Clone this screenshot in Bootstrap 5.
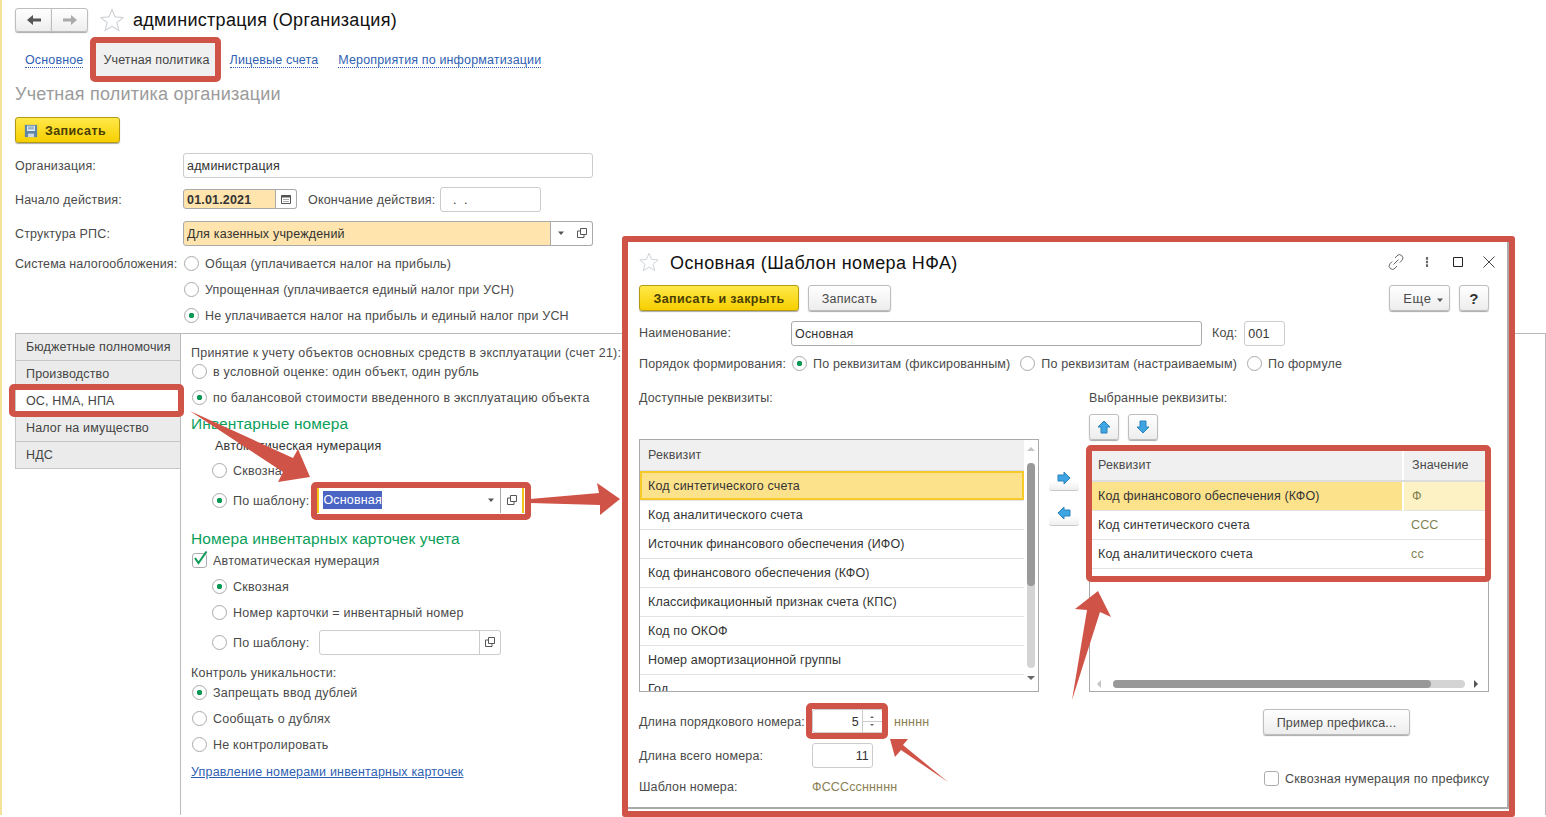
<!DOCTYPE html>
<html lang="ru">
<head>
  <meta charset="UTF-8">
  <title>Учетная политика организации</title>
  <link href="https://cdn.jsdelivr.net/npm/bootstrap@5.3.0/dist/css/bootstrap.min.css" rel="stylesheet">
  <style>
    html, body { height: 817px; overflow: hidden; }
    body { font-family: "Liberation Sans", Arial, sans-serif; font-size: 12.5px; letter-spacing: .18px; color: #4a4a4a; background: #fff; position: relative; }
    .page { height: 815px; border-left: 2px solid #f3e39a; padding-left: 13px; }

    /* header */
    .top-row { padding-top: 8px; height: 32px; }
    .title-big { font-size: 18px; color: #111; line-height: 24px; margin-left: 9px; letter-spacing: .3px; }
    .star-ico { width: 24px; height: 24px; margin-left: 12px; }
    .nav-pair .btn { width: 37px; height: 24px; padding: 0; line-height: 1; }
    .page-links { margin: 11px 0 0 0; height: 33px; padding-left: 0; }
    .page-links .nav-link { padding: 0 10px; height: 33px; line-height: 35px; font-size: 12.5px; letter-spacing: .14px; color: #2f5fb3; }
    .page-links .nav-link span { border-bottom: 1px dotted #2f5fb3; }
    .page-links .nav-link.active { background: #f0f0f0; color: #444; }
    .page-links .nav-link.active span { border: 0; }
    .page-head { font-size: 18px; color: #9b9b9b; height: 22px; line-height: 22px; margin: 7px 0 12px; font-weight: 400; letter-spacing: .22px; }

    /* 1C style buttons */
    .btn-grey, .btn-gold { font-size: 12.5px; padding: 2px 0 0; height: 26px; border-radius: 3px; box-shadow: 0 1px 1px #aaa; }
    .btn-grey { background: linear-gradient(#fff, #ededed); border: 1px solid #bdbdbd; color: #4a4a4a; }
    .btn-gold { background: linear-gradient(#ffe84a, #f7cf00); border: 1px solid #b39a12; color: #4a3e00; font-weight: 700; letter-spacing: .4px; }
    .btn-save { width: 105px; text-align: left; padding-left: 8px; }
    .btn-save svg { margin-right: 7px; vertical-align: -3px; }

    /* rows: every cell is a 20px line centred on the row's text */
    .line { display: flex; align-items: center; height: 20px; white-space: nowrap; }
    .org-form { display: grid; grid-template-columns: 168px 410px; grid-template-rows: 34px 34px 30px 26px 26px 20px; margin-top: 13px; }
    .org-form .wide { grid-column: 2; }
    .org-form .tight { letter-spacing: .07px; }

    .fld { flex-wrap: nowrap; height: 25px; margin-top: -2px; }
    .fld .form-control { height: 25px; min-height: 0; padding: 2px 3px 0; font-size: 12.5px; letter-spacing: .18px; color: #333; border: 1px solid #ccc; border-radius: 3px; box-shadow: none; }
    .fld .fld-btn { width: 22px; height: 25px; padding: 0; border: 1px solid #ccc; border-left: 0; background: #fff; border-radius: 0; display: flex; align-items: center; justify-content: center; }
    .fld .fld-btn:last-child { border-radius: 0 3px 3px 0; }
    .fld.has-btn .form-control { border-radius: 3px 0 0 3px; }
    .fld .form-control.hl { background: #ffe4ad; border-color: #aaa; color: #333; }
    .fld .hl ~ .fld-btn { border-color: #aaa; }
    .date-fld { width: 114px; height: 20px; }
    .date-fld .form-control, .date-fld .fld-btn { height: 20px; }
    .date-fld .form-control { font-weight: 700; }
    .date-end { width: 101px; margin-left: 5px; }
    .end-label { margin-left: 11px; }

    .form-check-input { width: 15px; height: 15px; margin: -2px 6px 0 0; flex: none; background-color: #fff; border: 1px solid #aaa; box-shadow: none; }
    .form-check-input:checked[type=radio] { background-color: #fff; border-color: #aaa; background-image: radial-gradient(circle, #0b9a55 0 2.5px, transparent 3px); }
    .form-check-input:checked[type=checkbox] { background-color: #fff; border-color: #aaa; background-image: none; }
    .radio-first { margin-left: 1px; }
    .check-wrap { position: relative; display: flex; }
    .check-wrap svg { position: absolute; left: 2px; top: -5px; }

    /* lower section */
    .lower { display: flex; height: 482px; margin-top: 7px; border-top: 1px solid #bbb; border-right: 1px solid #bbb; }
    .side-tabs { width: 165px; flex: none; }
    .side-tabs .nav-link { height: 27px; line-height: 27px; padding: 0 0 0 10px; white-space: nowrap; background: #ebebeb; border: 1px solid #c6c6c6; border-top: 0; border-right: 0; color: #444; font-size: 12.5px; letter-spacing: .15px; }
    .side-tabs .nav-link.active { background: #fff; }
    .panel-body { flex: 1; border-left: 1px solid #bbb; padding: 9px 0 0 10px; letter-spacing: .22px; display: grid; grid-template-rows: 19px 26px 27px 21px 25px 30px 39px 21px 26px 26px 30px 30px 20px 26px 26px 27px 20px; }
    .panel-body > .line:not(.step1) .form-check-input { margin-left: 1px; }
    .panel-body > .line .check-wrap .form-check-input { margin-right: 6px; }
    .panel-body > .green-head { font-size: 15.5px; letter-spacing: .1px; color: #0aa05a; margin-top: -1px; }
    .step1 { padding-left: 21px; }
    .dark-text { color: #333; margin-left: 24px; }
    .tpl-fld { width: 207px; margin-left: 8px; border-left: 2px solid #f5c518; border-right: 2px solid #f5c518; }
    .tpl-fld .form-control { border: 0; padding: 0 4px; }
    .fld.tpl-fld .fld-btn { border: 0; border-left: 1px solid #aaa; border-radius: 0; }
    .tpl-fld mark { background: #4a64c4; color: #fff; padding: 0; }
    .tpl-empty { width: 182px; margin-left: 10px; }
    .link-under { color: #2f5fb3; text-decoration: underline; letter-spacing: .18px; }

    /* dialog */
    .dlg { position: absolute; left: 622px; top: 236px; width: 893px; height: 581px; background: #fff; border: 6px solid #d05347; border-radius: 3px; z-index: 2; }
    .dlg-inner { height: 567px; border-right: 2px solid #aaa; border-bottom: 2px solid #aaa; padding: 0 18px 0 11px; font-size: 12.5px; letter-spacing: .15px; }
    .dlg-head { height: 40px; display: flex; align-items: center; }
    .dlg-title { font-size: 18px; color: #111; margin: 2px 0 0 11px; letter-spacing: .4px; }
    .dlg-tools { margin-left: auto; display: flex; align-items: center; gap: 15px; margin-right: -8px; }
    .dlg-buttons { display: flex; gap: 9px; margin-top: 3px; }
    .dlg-buttons .btn-grey { letter-spacing: .25px; }
    .b-close { width: 160px; }
    .b-write { width: 83px; }
    .dlg-buttons .b-more { width: 61px; margin-left: auto; padding-left: 8px; letter-spacing: .6px; font-size: 13px; }
    .dlg-buttons .b-help { width: 30px; font-weight: 700; font-size: 15px; color: #333; }
    .name-row { display: flex; align-items: center; height: 25px; margin-top: 10px; }
    .name-row .lbl { width: 152px; }
    .name-row .fld { margin-top: 0; }
    .name-row .fld .form-control { padding-top: 0; }
    .name-row .fld-name { width: 411px; }
    .name-row .fld-name .form-control { border-color: #aaa; }
    .code-lbl { margin: 0 7px 0 10px; }
    .fld-code { width: 41px; }
    .order-row { margin-top: 8px; }
    .order-row .lbl-order { margin-right: 6px; }
    .order-row .opt { margin-right: 10px; }
    .lists { display: grid; grid-template-columns: 400px 50px 400px; height: 305px; margin-top: 14px; }
    .grid-box { position: relative; border: 1px solid #aaa; overflow: hidden; }
    .grid-left { height: 253px; margin-top: 31px; }
    .grid-right { height: 243px; margin-top: 9px; }
    .move-btns { display: flex; gap: 9px; margin-top: 6px; }
    .move-btns .btn { width: 30px; padding: 0; }
    .mid-btns { padding: 77px 0 0 10px; display: flex; flex-direction: column; gap: 9px; }
    .mid-btns .btn { width: 30px; height: 26px; padding: 0 0 3px; border: 0; border-bottom: 1px solid #c8c8c8; border-radius: 3px; background: linear-gradient(#fff 65%, #eee); }
    .req-table { table-layout: fixed; margin: 0; width: 384px; --bs-table-bg: transparent; }
    .req-table th, .req-table td { font-weight: 400; font-size: 12.5px; color: #4a4a4a; padding: 1px 8px 0; height: 29px; vertical-align: middle; border-bottom: 1px solid #e3e3e3; white-space: nowrap; }
    .req-table td { color: #333; }
    .req-table th { background: #f0f0f0; height: 31px; border-bottom: 2px solid #ddd; }
    .req-table td.val { color: #7f7f50; }
    .grid-left .req-table tr.cur td { background: #fde28c; outline: 2px solid #f8c92a; outline-offset: -2px; }
    .grid-right .req-table { width: 396px; margin-left: 2px; }
    .grid-right .req-table th:first-child, .grid-right .req-table td:first-child { padding-left: 6px; }
    .grid-right .req-table th:first-child, .grid-right .req-table tr.cur td:first-child { border-right: 2px solid #fff; }
    .grid-right .req-table tr.cur td { background: #fde28c; }
    .grid-right .req-table tr.cur td.val { background: #fdf2c4; }
    .val-col { width: 85px; }
    .vbar, .hbar { position: absolute; background: #d4d4d4; border-radius: 4px; }
    .vbar { right: 3px; top: 23px; width: 8px; height: 205px; }
    .vbar i { display: block; width: 8px; height: 123px; background: #999; border-radius: 4px; }
    .hbar { left: 23px; bottom: 3px; height: 8px; width: 352px; }
    .hbar i { display: block; height: 8px; width: 318px; background: #999; border-radius: 4px; }
    .sarrow { position: absolute; width: 0; height: 0; border: 4px solid transparent; }
    .sa-up { right: 3px; top: 7px; border-bottom-color: #c4c4c4; border-top: 0; }
    .sa-down { right: 3px; top: 236px; border-top-color: #666; border-bottom: 0; }
    .sa-left { left: 7px; bottom: 3px; border-right-color: #c4c4c4; border-left: 0; }
    .sa-right { left: 384px; bottom: 3px; border-left-color: #555; border-right: 0; }
    .bottom-form { display: grid; grid-template-columns: 173px 451px 226px; grid-template-rows: 34px 31px 20px; margin-top: 19px; }
    .spin-fld { width: 71px; height: 24px; }
    .spin-fld .form-control { height: 24px; text-align: right; padding-right: 3px; }
    .fld.spin-fld .fld-btn { width: 21px; height: 24px; flex-direction: column; gap: 6px; background: linear-gradient(#ccc, #ccc) center / 100% 1px no-repeat #fff; }
    .tiny-up, .tiny-down { width: 0; height: 0; border: 2px solid transparent; display: block; }
    .tiny-up { border-bottom-color: #666; border-top: 0; }
    .tiny-down { border-top-color: #666; border-bottom: 0; }
    .total-fld { width: 61px; }
    .total-fld .form-control { text-align: right; padding-right: 3px; }
    .olive { color: #8a8054; }
    .olive-gap { margin-left: 11px; }
    .dlg-inner .b-sample { width: 147px; letter-spacing: .2px; }
    .check-last { margin: -8px 0 0 1px; letter-spacing: .22px; }

    .marks { position: absolute; left: 0; top: 0; z-index: 3; pointer-events: none; }
  </style>
</head>
<body>
  <svg width="0" height="0" class="d-block">
    <symbol id="ic-open" viewBox="0 0 12 12"><path d="M4.500 1.500h6v6h-6z M4.500 4H1.500v6.500h6.500V7.500" fill="none" stroke="#555" stroke-width="1"/></symbol>
    <symbol id="ic-caret" viewBox="0 0 8 8"><path d="M1 2.500h6L4 6z" fill="#555"/></symbol>
    <symbol id="ic-star" viewBox="0 0 24 24"><path d="M12 1.500l3 7.400 8 .6-6.100 5.100 1.900 7.800L12 18.200 5.200 22.400l1.900-7.800L1 9.500l8-.6z" fill="#fff" stroke="#cfd4d8" stroke-width="1.200"/></symbol>
  </svg>

  <div class="page">
    <div class="top-row d-flex align-items-start">
      <div class="btn-group nav-pair">
        <button class="btn btn-grey" type="button"><svg width="16" height="12" viewBox="0 0 16 12"><path d="M1 6l6-5v3.500h8v3H7V11z" fill="#555"/></svg></button>
        <button class="btn btn-grey" type="button"><svg width="16" height="12" viewBox="0 0 16 12"><path d="M15 6L9 1v3.500H1v3h8V11z" fill="#aaa"/></svg></button>
      </div>
      <svg class="star-ico"><use href="#ic-star"/></svg>
      <div class="title-big">администрация (Организация)</div>
    </div>

    <ul class="nav page-links">
      <li class="nav-item"><a class="nav-link" href="#"><span>Основное</span></a></li>
      <li class="nav-item"><a class="nav-link active" href="#"><span>Учетная политика</span></a></li>
      <li class="nav-item"><a class="nav-link" href="#"><span>Лицевые счета</span></a></li>
      <li class="nav-item"><a class="nav-link" href="#"><span>Мероприятия по информатизации</span></a></li>
    </ul>
    <h1 class="page-head">Учетная политика организации</h1>

    <button class="btn btn-gold btn-save d-block" type="button">
      <svg width="14" height="14" viewBox="0 0 16 16"><path d="M1 1h14v14H1z" fill="#5d86a8"/><path d="M3.500 2h9v6h-9z" fill="#e8eef3"/><path d="M4.500 11h7v4h-7z" fill="#cfd8df"/><path d="M4.500 3.500h7M4.500 5.500h7" stroke="#5d86a8"/></svg>Записать
    </button>

    <div class="org-form">
      <div class="line">Организация:</div>
      <div class="line"><div class="input-group fld"><input class="form-control" value="администрация"></div></div>

      <div class="line">Начало действия:</div>
      <div class="line">
        <div class="input-group fld has-btn date-fld">
          <input class="form-control hl" value="01.01.2021">
          <button class="fld-btn" type="button"><svg width="12" height="12" viewBox="0 0 12 12"><path d="M1.500 2.500h9v8h-9z" fill="none" stroke="#555"/><path d="M1.500 2h9v2.500h-9zM3.500 6h1v1h-1zM5.500 6h1v1h-1zM7.500 6h1v1h-1zM3.500 8h1v1h-1zM5.500 8h1v1h-1zM7.500 8h1v1h-1z" fill="#555"/></svg></button>
        </div>
        <span class="end-label">Окончание действия:</span>
        <div class="input-group fld date-end"><input class="form-control ps-2" value=" .  ."></div>
      </div>

      <div class="line">Структура РПС:</div>
      <div class="line">
        <div class="input-group fld has-btn">
          <input class="form-control hl" value="Для казенных учреждений">
          <button class="fld-btn" type="button"><svg width="8" height="8"><use href="#ic-caret"/></svg></button>
          <button class="fld-btn" type="button"><svg width="12" height="12"><use href="#ic-open"/></svg></button>
        </div>
      </div>

      <div class="line tight">Система налогообложения:</div>
      <label class="line"><input class="form-check-input radio-first" type="radio" name="tax">Общая (уплачивается налог на прибыль)</label>
      <label class="line wide"><input class="form-check-input radio-first" type="radio" name="tax">Упрощенная (уплачивается единый налог при УСН)</label>
      <label class="line wide"><input class="form-check-input radio-first" type="radio" name="tax" checked>Не уплачивается налог на прибыль и единый налог при УСН</label>
    </div>

    <div class="lower">
      <div class="side-tabs nav flex-column">
        <a class="nav-link" href="#">Бюджетные полномочия</a>
        <a class="nav-link" href="#">Производство</a>
        <a class="nav-link active" href="#">ОС, НМА, НПА</a>
        <a class="nav-link" href="#">Налог на имущество</a>
        <a class="nav-link" href="#">НДС</a>
      </div>
      <div class="panel-body">
        <div class="line">Принятие к учету объектов основных средств в эксплуатации (счет 21):</div>
        <label class="line"><input class="form-check-input" type="radio" name="os">в условной оценке: один объект, один рубль</label>
        <label class="line"><input class="form-check-input" type="radio" name="os" checked>по балансовой стоимости введенного в эксплуатацию объекта</label>
        <div class="line green-head">Инвентарные номера</div>
        <div class="line dark-text">Автоматическая нумерация</div>
        <label class="line step1"><input class="form-check-input" type="radio" name="inv">Сквозная</label>
        <div class="line step1">
          <input class="form-check-input" type="radio" name="inv" checked>По шаблону:
          <div class="input-group fld has-btn tpl-fld">
            <div class="form-control d-flex align-items-center"><mark>Основная</mark></div>
            <button class="fld-btn" type="button"><svg width="8" height="8"><use href="#ic-caret"/></svg></button>
            <button class="fld-btn" type="button"><svg width="12" height="12"><use href="#ic-open"/></svg></button>
          </div>
        </div>
        <div class="line green-head">Номера инвентарных карточек учета</div>
        <label class="line">
          <span class="check-wrap"><input class="form-check-input" type="checkbox" checked>
            <svg width="16" height="16" viewBox="0 0 16 16"><path d="M2 8l3.500 5L13.500 1.500" fill="none" stroke="#0b9a55" stroke-width="2"/></svg></span>Автоматическая нумерация
        </label>
        <label class="line step1"><input class="form-check-input" type="radio" name="card" checked>Сквозная</label>
        <label class="line step1"><input class="form-check-input" type="radio" name="card">Номер карточки = инвентарный номер</label>
        <div class="line step1">
          <input class="form-check-input" type="radio" name="card">По шаблону:
          <div class="input-group fld has-btn tpl-empty">
            <input class="form-control">
            <button class="fld-btn" type="button"><svg width="12" height="12"><use href="#ic-open"/></svg></button>
          </div>
        </div>
        <div class="line">Контроль уникальности:</div>
        <label class="line"><input class="form-check-input" type="radio" name="uniq" checked>Запрещать ввод дублей</label>
        <label class="line"><input class="form-check-input" type="radio" name="uniq">Сообщать о дублях</label>
        <label class="line"><input class="form-check-input" type="radio" name="uniq">Не контролировать</label>
        <div class="line"><a class="link-under" href="#">Управление номерами инвентарных карточек</a></div>
      </div>
    </div>
  </div>

  <!-- окно шаблона -->
  <div class="dlg">
    <div class="dlg-inner">
      <div class="dlg-head">
        <svg width="20" height="20"><use href="#ic-star"/></svg>
        <div class="dlg-title">Основная (Шаблон номера НФА)</div>
        <div class="dlg-tools">
          <svg width="16" height="16" viewBox="0 0 16 16"><path d="M5.500 10.500l5-5M7 4l2-2.200a3.200 3.200 0 0 1 5 4.400l-2.200 2.300M9 12l-2 2.200a3.200 3.200 0 0 1-5-4.400l2.200-2.300" fill="none" stroke="#666"/></svg>
          <svg width="16" height="16" viewBox="0 0 16 16"><path d="M6.500 2.500h3v3h-3zM6.500 6.500h3v3h-3zM6.500 10.500h3v3h-3z" fill="#666" transform="matrix(.7 0 0 .9 2.400 .8)"/></svg>
          <svg width="16" height="16" viewBox="0 0 16 16"><path d="M3.500 3.500h9v9h-9z" fill="none" stroke="#222"/></svg>
          <svg width="16" height="16" viewBox="0 0 16 16"><path d="M2.500 2.500l11 11M13.500 2.500l-11 11" stroke="#444"/></svg>
        </div>
      </div>

      <div class="dlg-buttons">
        <button class="btn btn-gold b-close" type="button">Записать и закрыть</button>
        <button class="btn btn-grey b-write" type="button">Записать</button>
        <button class="btn btn-grey b-more" type="button">Еще <svg width="8" height="8"><use href="#ic-caret"/></svg></button>
        <button class="btn btn-grey b-help" type="button">?</button>
      </div>

      <div class="name-row">
        <div class="lbl">Наименование:</div>
        <div class="input-group fld fld-name"><input class="form-control" value="Основная"></div>
        <div class="code-lbl">Код:</div>
        <div class="input-group fld fld-code"><input class="form-control" value="001"></div>
      </div>

      <div class="line order-row">
        <span class="lbl-order">Порядок формирования:</span>
        <label class="d-flex align-items-center opt"><input class="form-check-input" type="radio" name="ord" checked>По реквизитам (фиксированным)</label>
        <label class="d-flex align-items-center opt"><input class="form-check-input" type="radio" name="ord">По реквизитам (настраиваемым)</label>
        <label class="d-flex align-items-center opt"><input class="form-check-input" type="radio" name="ord">По формуле</label>
      </div>

      <div class="lists">
        <div>
          <div class="line">Доступные реквизиты:</div>
          <div class="grid-box grid-left">
            <table class="table req-table">
              <thead><tr><th>Реквизит</th></tr></thead>
              <tbody>
                <tr class="cur"><td>Код синтетического счета</td></tr>
                <tr><td>Код аналитического счета</td></tr>
                <tr><td>Источник финансового обеспечения (ИФО)</td></tr>
                <tr><td>Код финансового обеспечения (КФО)</td></tr>
                <tr><td>Классификационный признак счета (КПС)</td></tr>
                <tr><td>Код по ОКОФ</td></tr>
                <tr><td>Номер амортизационной группы</td></tr>
                <tr><td>Год</td></tr>
              </tbody>
            </table>
            <span class="sarrow sa-up"></span>
            <div class="vbar"><i></i></div>
            <span class="sarrow sa-down"></span>
          </div>
        </div>
        <div class="mid-btns">
          <button class="btn" type="button"><svg width="14" height="14" viewBox="0 0 14 14"><path d="M13 7L7 1v3H1v6h6v3z" fill="#3fa5e2" stroke="#2b83bd"/></svg></button>
          <button class="btn" type="button"><svg width="14" height="14" viewBox="0 0 14 14"><path d="M1 7l6-6v3h6v6H7v3z" fill="#3fa5e2" stroke="#2b83bd"/></svg></button>
        </div>
        <div>
          <div class="line">Выбранные реквизиты:</div>
          <div class="move-btns">
            <button class="btn btn-grey" type="button"><svg width="14" height="14" viewBox="0 0 14 14"><path d="M7 1l6 6h-3v6H4V7H1z" fill="#3fa5e2" stroke="#2b83bd"/></svg></button>
            <button class="btn btn-grey" type="button"><svg width="14" height="14" viewBox="0 0 14 14"><path d="M7 13l6-6h-3V1H4v6H1z" fill="#3fa5e2" stroke="#2b83bd"/></svg></button>
          </div>
          <div class="grid-box grid-right">
            <table class="table req-table">
              <colgroup><col><col class="val-col"></colgroup>
              <thead><tr><th>Реквизит</th><th>Значение</th></tr></thead>
              <tbody>
                <tr class="cur"><td>Код финансового обеспечения (КФО)</td><td class="val">Ф</td></tr>
                <tr><td>Код синтетического счета</td><td class="val">ССС</td></tr>
                <tr><td>Код аналитического счета</td><td class="val">сс</td></tr>
              </tbody>
            </table>
            <span class="sarrow sa-left"></span>
            <div class="hbar"><i></i></div>
            <span class="sarrow sa-right"></span>
          </div>
        </div>
      </div>

      <div class="bottom-form">
        <div class="line">Длина порядкового номера:</div>
        <div class="line">
          <div class="input-group fld has-btn spin-fld">
            <input class="form-control" value="5">
            <button class="fld-btn" type="button"><span class="tiny-up"></span><span class="tiny-down"></span></button>
          </div>
          <span class="olive olive-gap">ннннн</span>
        </div>
        <div class="line"><button class="btn btn-grey b-sample" type="button">Пример префикса...</button></div>

        <div class="line">Длина всего номера:</div>
        <div class="line"><div class="input-group fld total-fld"><input class="form-control" value="11"></div></div>
        <div></div>

        <div class="line">Шаблон номера:</div>
        <div class="line olive">ФСССссннннн</div>
        <label class="line check-last"><input class="form-check-input" type="checkbox">Сквозная нумерация по префиксу</label>
      </div>
    </div>
  </div>

  <!-- разметка поверх скриншота: рамки и стрелки -->
  <svg class="marks" width="1546" height="817" viewBox="0 0 1546 817">
    <g fill="none" stroke="#d05347" stroke-width="6">
      <rect x="93" y="40" width="125" height="39" rx="2"/>
      <rect x="12" y="387" width="169" height="27" rx="2"/>
      <rect x="314" y="485" width="214" height="32" rx="2"/>
      <rect x="1089" y="448" width="399" height="131" rx="2"/>
      <rect x="809" y="706" width="76" height="30" rx="2"/>
    </g>
    <g fill="#d05347">
      <path d="M190 411L293 458 298 449 310 477 278 482 283 472z"/>
      <path d="M530 499L599 493 597 483 620 499 600 515 600 505 530 503z"/>
      <path d="M1072 700L1087 610 1075 609 1098 591 1111 617 1100 612z"/>
      <path d="M948 782L903 745 908 739 890 739 895 757 901 750z"/>
    </g>
  </svg>

  <script src="https://cdn.jsdelivr.net/npm/bootstrap@5.3.0/dist/js/bootstrap.bundle.min.js"></script>
</body>
</html>
